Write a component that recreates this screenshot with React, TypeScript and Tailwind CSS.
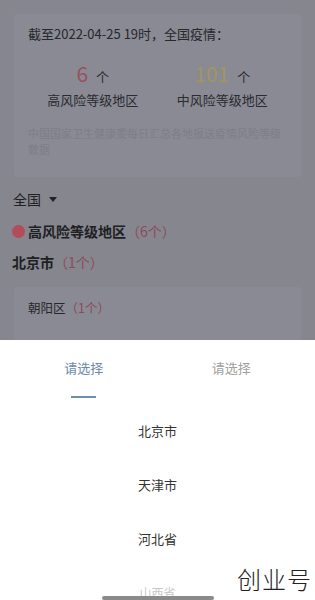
import React from "react";

export default function App() {
  const font = { fontFamily: '"Noto Sans CJK SC", "Noto Sans", sans-serif' };
  return (
    <div className="relative w-[315px] h-[600px] overflow-hidden bg-white" style={font}>
      <div className="h-[340px] bg-[#85868e] pt-[14px] overflow-hidden">
        <div className="mx-[14px] bg-[#898a93] rounded-[3px] px-[14px] pt-[11px] pb-[14px] h-[163px]">
          <div className="text-[13px] leading-[18px] text-[#26272c]">截至2022-04-25 19时，全国疫情：</div>
          <div className="flex mt-[18px]">
            <div className="flex-1 flex flex-col items-center">
              <div className="flex items-baseline gap-[8px] leading-[24px]">
                <span className="text-[21px] text-[#9a5060]">6</span>
                <span className="text-[13px] text-[#2a2b30]">个</span>
              </div>
              <div className="text-[13px] leading-[18px] text-[#2a2b30] mt-[2px]">高风险等级地区</div>
            </div>
            <div className="flex-1 flex flex-col items-center">
              <div className="flex items-baseline gap-[8px] leading-[24px]">
                <span className="text-[21px] text-[#a4955c]">101</span>
                <span className="text-[13px] text-[#2a2b30]">个</span>
              </div>
              <div className="text-[13px] leading-[18px] text-[#2a2b30] mt-[2px]">中风险等级地区</div>
            </div>
          </div>
          <div className="mt-[16px] text-[11px] leading-[16px] text-[#7d7e87]">
            中国国家卫生健康委每日汇总各地报送疫情风险等级数据
          </div>
        </div>
        <div className="px-[13px] mt-[12px] flex items-center gap-[8px] h-[20px]">
          <span className="text-[14px] text-[#1f2024]">全国</span>
          <svg width="8" height="5" viewBox="0 0 8 5"><path d="M0 0h8L4 5z" fill="#222" /></svg>
        </div>
        <div className="px-[12px] mt-[11px] flex items-center h-[22px]">
          <span className="w-[13px] h-[13px] rounded-full bg-[#b34b58] mr-[3px]" />
          <span className="text-[14px] font-semibold text-[#1f2024]">高风险等级地区</span>
          <span className="text-[14px] text-[#8e4a58]">（6个）</span>
        </div>
        <div className="px-[12px] mt-[9px] flex items-center h-[22px]">
          <span className="text-[14px] font-semibold text-[#1f2024]">北京市</span>
          <span className="text-[14px] text-[#8e4a58]">（1个）</span>
        </div>
        <div className="mx-[14px] mt-[14px] bg-[#898a93] rounded-[3px] px-[14px] pt-[12px] h-[70px]">
          <div className="flex items-center h-[18px]">
            <span className="text-[12.5px] text-[#26272c]">朝阳区</span>
            <span className="text-[12.5px] text-[#8e4a58]">（1个）</span>
          </div>
        </div>
      </div>
      <div className="h-[260px] bg-white relative">
        <div className="flex pt-[18px]">
          <div className="flex-1 flex flex-col items-center pl-[10px]">
            <span className="text-[13px] leading-[20px] text-[#6b8aa8]">请选择</span>
            <span className="mt-[18px] w-[25px] h-[2px] bg-[#6d8fad]" />
          </div>
          <div className="flex-1 flex flex-col items-center pr-[10px]">
            <span className="text-[13px] leading-[20px] text-[#a0a0a0]">请选择</span>
          </div>
        </div>
        <div className="flex flex-col items-center mt-[23px]">
          <div className="h-[54px] text-[13px] leading-[20px] text-[#333]">北京市</div>
          <div className="h-[54px] text-[13px] leading-[20px] text-[#333]">天津市</div>
          <div className="h-[54px] text-[13px] leading-[20px] text-[#333]">河北省</div>
          <div className="h-[54px] text-[12px] leading-[20px] text-[#c8c8c8]">山西省</div>
        </div>
        <div className="absolute left-[102px] bottom-[0px] w-[112px] h-[4px] rounded-full bg-[#8a8a8a]" />
        <div className="absolute right-[3px] bottom-[6px] text-[24px] leading-[30px] font-light text-[#222] tracking-[1px]">创业号</div>
      </div>
    </div>
  );
}
